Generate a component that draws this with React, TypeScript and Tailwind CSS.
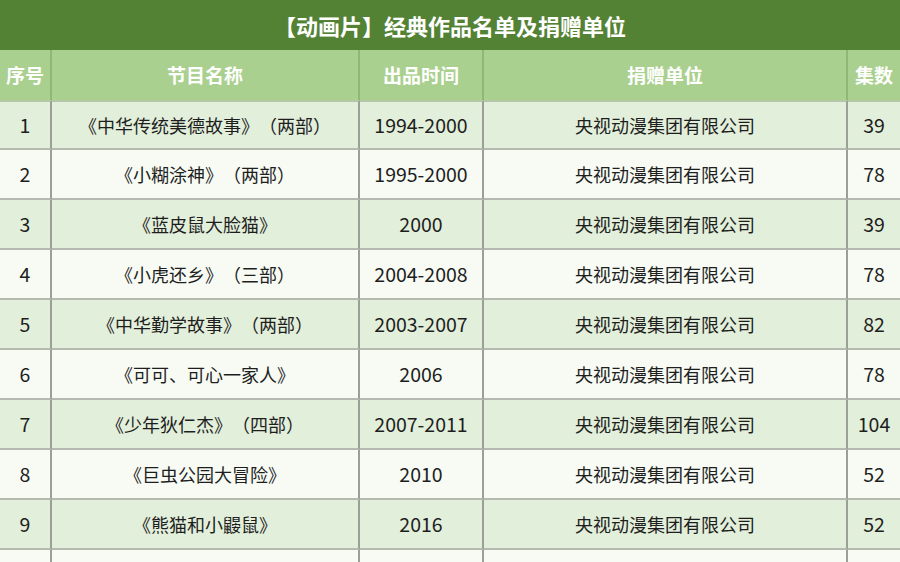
import React from "react";

const rows: [string, string, string, string, string][] = [
  ["1", "《中华传统美德故事》（两部）", "1994-2000", "央视动漫集团有限公司", "39"],
  ["2", "《小糊涂神》（两部）", "1995-2000", "央视动漫集团有限公司", "78"],
  ["3", "《蓝皮鼠大脸猫》", "2000", "央视动漫集团有限公司", "39"],
  ["4", "《小虎还乡》（三部）", "2004-2008", "央视动漫集团有限公司", "78"],
  ["5", "《中华勤学故事》（两部）", "2003-2007", "央视动漫集团有限公司", "82"],
  ["6", "《可可、可心一家人》", "2006", "央视动漫集团有限公司", "78"],
  ["7", "《少年狄仁杰》（四部）", "2007-2011", "央视动漫集团有限公司", "104"],
  ["8", "《巨虫公园大冒险》", "2010", "央视动漫集团有限公司", "52"],
  ["9", "《熊猫和小鼹鼠》", "2016", "央视动漫集团有限公司", "52"],
  ["", "", "", "", ""],
];

const headers = ["序号", "节目名称", "出品时间", "捐赠单位", "集数"];

export default function App() {
  return (
    <div
      className="w-[900px] h-[562px] overflow-hidden bg-white [text-spacing-trim:space-all]"
      style={{ fontFamily: '"Noto Sans CJK SC", "Noto Sans", sans-serif' }}
    >
      <div className="h-[50px] bg-[#548235] flex items-center justify-center text-white font-bold text-[22px] [text-spacing-trim:space-all]">
        【动画片】经典作品名单及捐赠单位
      </div>
      <div className="grid grid-cols-[52px_308px_124px_364px_52px]">
        {headers.map((h, i) => (
          <div
            key={h}
            className={`h-[50px] bg-[#a9d08e] flex items-center justify-center text-white font-bold text-[19px] ${
              i < 4 ? "border-r-2 border-[#8fb877]" : ""
            }`}
          >
            {h}
          </div>
        ))}
        {rows.map((r, ri) =>
          r.map((c, ci) => (
            <div
              key={`${ri}-${ci}`}
              className={`h-[50px] flex items-center justify-center text-[#1e1e1e] border-b-2 border-[#b4bab0] [text-spacing-trim:space-all] ${
                ci === 1 || ci === 3 ? "text-[18px]" : "text-[19.5px]"
              } ${ri % 2 === 0 ? "bg-[#e2efda]" : "bg-[#f7fbf4]"} ${
                ci < 4 ? "border-r-2 border-r-[#9aa096]" : ""
              } ${ri === 0 ? "border-t-2 border-t-[#b4c8a6]" : ""}`}
            >
              {c}
            </div>
          ))
        )}
      </div>
    </div>
  );
}
